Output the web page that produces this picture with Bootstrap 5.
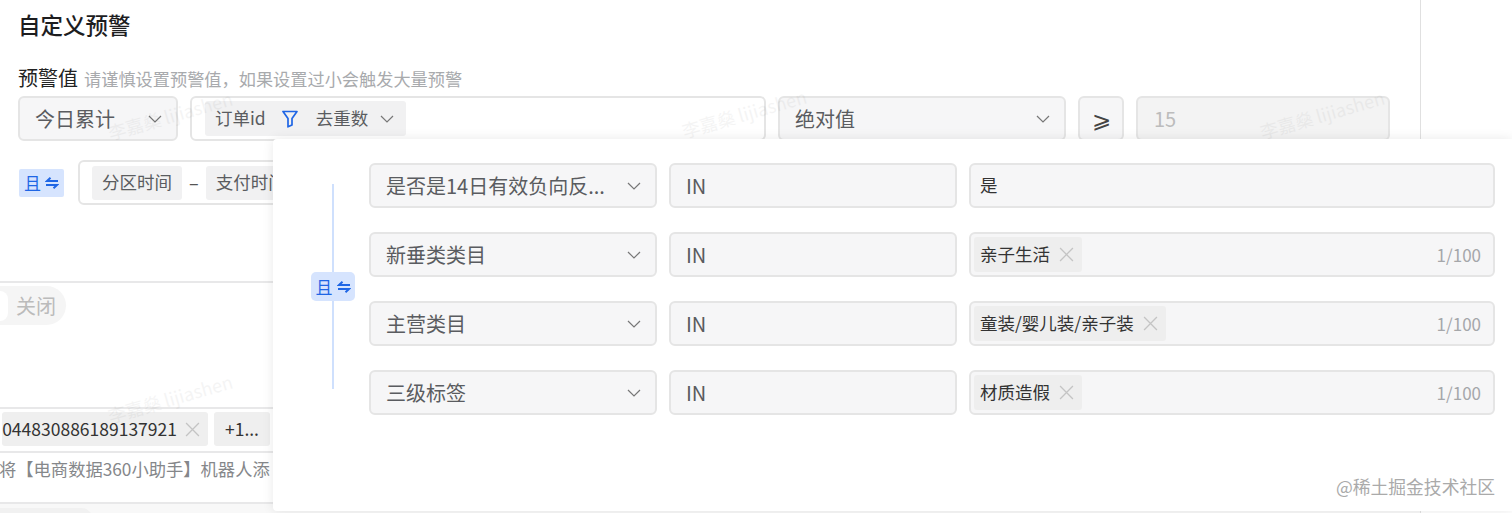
<!DOCTYPE html>
<html lang="zh">
<head>
    <meta charset="utf-8">
    <title>自定义预警</title>
    <link href="https://cdn.jsdelivr.net/npm/bootstrap@5.3.3/dist/css/bootstrap.min.css" rel="stylesheet">
    <style>
        body {
            width: 1512px;
            height: 513px;
            overflow: hidden;
            background: #fff;
            font-family: "Noto Sans CJK SC", "Liberation Sans", sans-serif;
            color: #555;
        }
        .page-panel {
            width: 1421px;
            height: 513px;
            border-right: 1px solid #e0e0e0;
            position: relative;
            overflow: hidden;
        }
        .upper-part { padding-left: 18px; height: 281px; }
        .page-title {
            font-size: 22.5px;
            line-height: 30px;
            padding-top: 9px;
            font-weight: 500;
            color: #1d1d1f;
            margin: 0;
        }
        .label-line { margin-top: 26px; height: 31px; line-height: 25px; }
        .label-main { font-size: 20px; color: #222; }
        .label-hint { font-size: 17.2px; color: #a8aaad; margin-left: 6px; }
        .ctl-row { height: 45px; gap: 12px; }
        .ctl-box {
            height: 45px;
            border: 2px solid #e5e5e5;
            border-radius: 6px;
            background: #f6f6f7;
            font-size: 20px;
            color: #5a5c60;
            flex-shrink: 0;
        }
        .ctl-white { background: #fff; }
        .sel-box { justify-content: space-between; padding: 0 14px 0 15px; }
        .w-today { width: 160px; }
        .w-field { width: 576px; padding-left: 13px; }
        .w-abs { width: 288px; }
        .w-op { width: 46px; justify-content: center; color: #444; font-size: 23px; }
        .w-num { width: 254px; padding-left: 16px; color: #bcbcbc; background: #f3f3f3; }
        .w-cond { width: 288px; }
        .cond-val { flex: 0 0 526px; padding: 0 12px 0 3px; justify-content: space-between; }
        .in-box { padding-left: 15px; }
        .chip {
            height: 35px;
            background: #f1f1f2;
            border-radius: 3px;
            font-size: 17.5px;
            color: #444;
            white-space: nowrap;
        }
        .chip-fn { width: 201px; padding-left: 10px; color: #5a5c60; }
        .chip-fn .fn-icon { margin: 0 18px 0 16px; }
        .chip-fn .fn-chev { margin-left: 12px; }
        .chip-time { padding: 0 10px; height: 34px; color: #5a5c60; }
        .chip-val { padding: 0 8px 0 6px; background: #eeeeee; color: #333; }
        .chip-val svg { margin-left: 9px; }
        .rel-tag {
            width: 45px;
            height: 28px;
            background: #d6e4fe;
            color: #1f66e5;
            font-size: 17px;
            border-radius: 2px;
            flex-shrink: 0;
        }
        .second-row { margin-top: 19px; padding-left: 1px; gap: 14px; }
        .time-field { width: 400px; padding-left: 12px; }
        .dash-sep { margin: 0 7px; font-size: 18px; color: #555; }
        .rule-line { border-top: 2px solid #e8e8e9; }
        .toggle-area { height: 124px; padding-top: 3px; }
        .toggle-pill {
            width: 66px;
            height: 39px;
            background: #f5f5f5;
            border-radius: 0 20px 20px 0;
            color: #bbb;
            font-size: 20px;
        }
        .toggle-knob {
            width: 8px;
            height: 30px;
            background: #fff;
            border-radius: 0 15px 15px 0;
            margin-right: 8px;
        }
        .tag-line {
            width: 273px;
            height: 42px;
            padding: 0 3px 2px 0;
            gap: 6px;
            overflow: hidden;
            justify-content: flex-end;
            align-items: center;
        }
        .tag-strip { height: 34px; background: #efefef; padding: 0 8px 0 0; font-size: 17.5px; color: #333; flex-shrink: 0; }
        .tag-strip svg { margin-left: 8px; }
        .tag-more { padding: 0 11px; }
        .help-line { height: 49px; padding-top: 3px; font-size: 17.3px; color: #85878a; white-space: nowrap; line-height: 26px; margin-left: -1px; }
        .end-strip { height: 20px; background: #f8f8f8; padding-top: 4px; }
        .bottom-pill { width: 92px; height: 16px; background: #f1f1f1; border-radius: 0 10px 0 0; }
        .mark-text {
            position: absolute;
            color: #000;
            opacity: .04;
            font-size: 18px;
            white-space: nowrap;
            transform: rotate(-16deg);
            pointer-events: none;
        }
        .mark-a { left: 106px; top: 102px; }
        .mark-b { left: 680px; top: 100px; }
        .mark-c { left: 1258px; top: 101px; }
        .mark-d { left: 106px; top: 385px; }
        .float-panel {
            position: absolute;
            left: 273px;
            top: 139px;
            right: 0;
            bottom: 2px;
            background: #fff;
            border-radius: 4px 0 0 4px;
            box-shadow: 0 0 12px rgba(0, 0, 0, .09);
            padding: 24px 18px 0 37px;
            gap: 14px;
        }
        .rel-col { width: 45px; padding: 21px 0 26px; position: relative; flex-shrink: 0; }
        .rel-bar { width: 2px; height: 205px; background: #cfe0fd; margin: 0 auto; }
        .rel-float { position: absolute; left: 1px; top: 109px; height: 29px; border-radius: 5px; width: 44px; }
        .cond-list { gap: 24px; flex: 1; }
        .cond-row { gap: 12px; }
        .count-text { font-size: 17px; color: #a5a7aa; }
        .site-mark {
            position: absolute;
            right: 17px;
            bottom: 13px;
            font-size: 17.8px;
            color: #aaa;
            line-height: 24px;
        }
    </style>
</head>
<body>
    <svg width="0" height="0" class="position-absolute">
        <symbol id="chev" viewBox="0 0 14 8"><path d="M1 1l6 6 6-6" fill="none" stroke="#777" stroke-width="1.2"/></symbol>
        <symbol id="cross" viewBox="0 0 14 14"><path d="M1 1l12 12M13 1L1 13" fill="none" stroke="#c4c4c4" stroke-width="1.2"/></symbol>
        <symbol id="swap" viewBox="0 0 14 12"><path d="M13 4H2l3.500-3.200M1 8h11l-3.500 3.200" fill="none" stroke="#1f66e5" stroke-width="2"/></symbol>
    </svg>

    <div class="page-panel">
        <div class="upper-part">
            <h1 class="page-title">自定义预警</h1>
            <div class="label-line"><span class="label-main">预警值</span><span class="label-hint">请谨慎设置预警值，如果设置过小会触发大量预警</span></div>
            <div class="ctl-row d-flex">
                <div class="ctl-box sel-box w-today d-flex align-items-center">今日累计<svg width="14" height="8"><use href="#chev"/></svg></div>
                <div class="ctl-box ctl-white w-field d-flex align-items-center">
                    <div class="chip chip-fn d-flex align-items-center">
                        订单id
                        <svg class="fn-icon" width="16" height="18" viewBox="0 0 16 18"><path d="M1 1.500h14L10 8.500v6.500l-4 1.800V8.500z" fill="none" stroke="#1f66e5" stroke-width="1.700" stroke-linejoin="round"/></svg>
                        去重数
                        <svg class="fn-chev" width="14" height="8"><use href="#chev"/></svg>
                    </div>
                </div>
                <div class="ctl-box sel-box w-abs d-flex align-items-center">绝对值<svg width="14" height="8"><use href="#chev"/></svg></div>
                <div class="ctl-box w-op d-flex align-items-center">⩾</div>
                <div class="ctl-box w-num d-flex align-items-center">15</div>
            </div>
            <div class="second-row d-flex align-items-center">
                <div class="rel-tag d-flex align-items-center justify-content-center gap-1">且<svg width="14" height="12"><use href="#swap"/></svg></div>
                <div class="ctl-box ctl-white time-field d-flex align-items-center">
                    <div class="chip chip-time d-flex align-items-center">分区时间</div>
                    <span class="dash-sep">–</span>
                    <div class="chip chip-time d-flex align-items-center">支付时间</div>
                </div>
            </div>
        </div>

        <div class="rule-line">
            <div class="toggle-area">
                <div class="toggle-pill d-flex align-items-center"><span class="toggle-knob"></span>关闭</div>
            </div>
        </div>
        <div class="rule-line">
            <div class="tag-line d-flex">
                <div class="chip tag-strip d-flex align-items-center">044830886189137921<svg width="15" height="15"><use href="#cross"/></svg></div>
                <div class="chip tag-strip tag-more d-flex align-items-center">+1...</div>
            </div>
        </div>
        <div class="rule-line">
            <div class="help-line">将【电商数据360小助手】机器人添</div>
        </div>
        <div class="rule-line end-strip"><div class="bottom-pill"></div></div>

        <span class="mark-text mark-a">李嘉燊 lijiashen</span>
        <span class="mark-text mark-b">李嘉燊 lijiashen</span>
        <span class="mark-text mark-c">李嘉燊 lijiashen</span>
        <span class="mark-text mark-d">李嘉燊 lijiashen</span>
    </div>

    <div class="float-panel d-flex align-items-start">
        <div class="rel-col">
            <div class="rel-bar"></div>
            <div class="rel-tag rel-float d-flex align-items-center justify-content-center gap-1">且<svg width="14" height="12"><use href="#swap"/></svg></div>
        </div>
        <div class="cond-list d-flex flex-column">
            <div class="cond-row d-flex">
                <div class="ctl-box sel-box w-cond d-flex align-items-center">是否是14日有效负向反...<svg width="14" height="8"><use href="#chev"/></svg></div>
                <div class="ctl-box in-box w-cond d-flex align-items-center">IN</div>
                <div class="ctl-box cond-val d-flex align-items-center"><div class="chip chip-val d-flex align-items-center bg-transparent">是</div></div>
            </div>
            <div class="cond-row d-flex">
                <div class="ctl-box sel-box w-cond d-flex align-items-center">新垂类类目<svg width="14" height="8"><use href="#chev"/></svg></div>
                <div class="ctl-box in-box w-cond d-flex align-items-center">IN</div>
                <div class="ctl-box cond-val d-flex align-items-center">
                    <div class="chip chip-val d-flex align-items-center">亲子生活<svg width="15" height="15"><use href="#cross"/></svg></div>
                    <span class="count-text">1/100</span>
                </div>
            </div>
            <div class="cond-row d-flex">
                <div class="ctl-box sel-box w-cond d-flex align-items-center">主营类目<svg width="14" height="8"><use href="#chev"/></svg></div>
                <div class="ctl-box in-box w-cond d-flex align-items-center">IN</div>
                <div class="ctl-box cond-val d-flex align-items-center">
                    <div class="chip chip-val d-flex align-items-center">童装/婴儿装/亲子装<svg width="15" height="15"><use href="#cross"/></svg></div>
                    <span class="count-text">1/100</span>
                </div>
            </div>
            <div class="cond-row d-flex">
                <div class="ctl-box sel-box w-cond d-flex align-items-center">三级标签<svg width="14" height="8"><use href="#chev"/></svg></div>
                <div class="ctl-box in-box w-cond d-flex align-items-center">IN</div>
                <div class="ctl-box cond-val d-flex align-items-center">
                    <div class="chip chip-val d-flex align-items-center">材质造假<svg width="15" height="15"><use href="#cross"/></svg></div>
                    <span class="count-text">1/100</span>
                </div>
            </div>
        </div>
        <span class="site-mark">@稀土掘金技术社区</span>
    </div>
    <script src="https://cdn.jsdelivr.net/npm/bootstrap@5.3.3/dist/js/bootstrap.bundle.min.js"></script>
</body>
</html>
